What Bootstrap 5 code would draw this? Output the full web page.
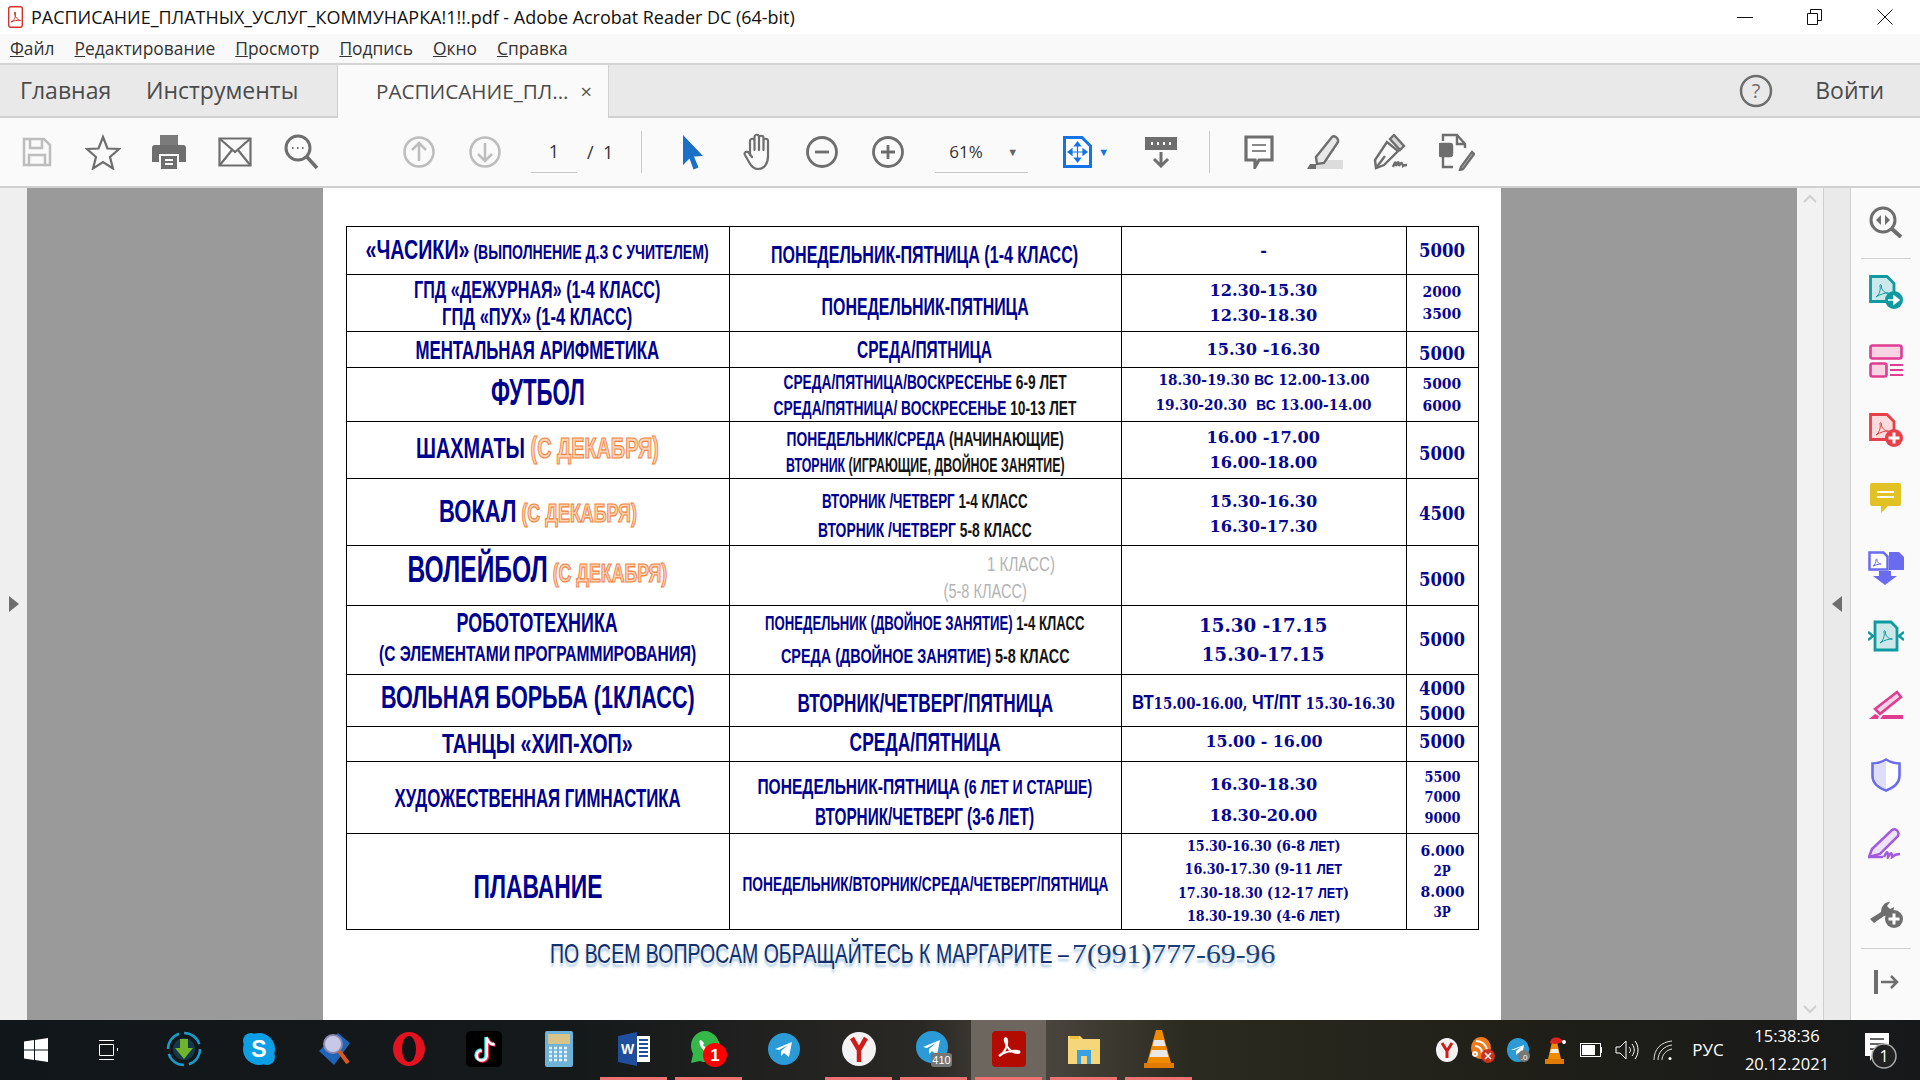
<!DOCTYPE html>
<html>
  <head>
    <title>Adobe Acrobat Reader DC</title>
    <link href="https://cdn.jsdelivr.net/npm/bootstrap@5.3.3/dist/css/bootstrap.min.css" rel="stylesheet">
    <style>
      html, body { height: 100%; }
      body { width: 1920px; height: 1080px; overflow: hidden; background: #fff; color: #333; font-family: "Open Sans", "Liberation Sans", sans-serif; }

      /* window chrome */
      .win-title { height: 34px; background: #fff; color: #111; font-size: 18px; white-space: nowrap; }
      .win-btn { width: 70px; height: 34px; }
      .menu-bar { height: 31px; background: #f9f9f9; border-bottom: 2px solid #d4d4d4; font-size: 17.4px; color: #333; gap: 20px; padding-left: 10px; }
      .tab-bar { height: 53px; background: #e9e9e9; border-bottom: 2px solid #d0d0d0; font-size: 23px; color: #4b4b4b; }
      .tab-home { width: 146px; padding-left: 20px; }
      .tab-tools { width: 191px; }
      .tab-doc { width: 272px; height: 53px; background: #fafafa; border-left: 1px solid #d0d0d0; border-right: 1px solid #d0d0d0; padding-left: 38px; margin-bottom: -2px; }
      .tab-x { font-size: 20px; margin-left: 14px; color: #555; }
      .sign-in { margin-left: 42px; margin-right: 36px; }
      .tool-bar { height: 70px; background: #fafafa; border-bottom: 2px solid #d0d0d0; padding-left: 4px; }
      .tool { width: 66px; height: 66px; flex: none; }
      .tool-sep { width: 1px; height: 42px; background: #c8c8c8; flex: none; }
      .page-box { width: 46px; height: 42px; border-bottom: 1px solid #c8c8c8; text-align: center; line-height: 40px; font-size: 18px; margin-left: 13px; }
      .page-total { margin-left: 10px; font-size: 18px; }
      .page-sep { margin-left: 28px; }
      .zoom-box { width: 93px; height: 42px; border-bottom: 1px solid #c8c8c8; line-height: 40px; font-size: 17px; padding: 0 10px 0 14px; margin-left: 14px; }
      .caret-gray { color: #666; font-size: 11px; }
      .caret-blue { color: #1473e6; font-size: 11px; margin-left: 6px; }
      .ms-tool-a { margin-left: 52px; }
      .ms-tool-b { margin-left: 18px; }
      .ms-tool-c { margin-left: 35px; }
      .ms-tool-d { margin-left: 19px; }
      .ms-tool-e { margin-left: 15px; }
      .ms-tool-f { margin-left: 16px; }
      .ms-tool-g { margin-left: -3px; }

      /* document area */
      .doc-area { height: 832px; }
      .side-left { width: 27px; background: #efefef; flex: none; }
      .viewer { width: 1770px; background: #9a9a9a; flex: none; }
      .pdf-page { width: 1178px; height: 832px; background: #fff; padding-top: 38px; }
      .scroll-col { width: 27px; background: #f2f2f2; border-right: 1px solid #cfcfcf; flex: none; padding: 6px 0; }
      .panel-fold { width: 27px; background: #eaeaea; border-right: 1px solid #cfcfcf; flex: none; }
      .tool-panel { flex: 1; background: #fafafa; padding-top: 18px; }
      .side-tool { height: 69px; }
      .side-tool-short { height: 52px; }
      .side-sep { width: 50px; height: 1px; background: #d0d0d0; margin: 0 auto 16px; }
      .side-sep-last { margin-bottom: 21px; }

      /* schedule */
      .table.sched { width: 1132px; margin: 0 auto; table-layout: fixed; border-color: #000; line-height: 20px; }
      .table.sched > tbody > tr > td { padding: 0; border: 1.5px solid #000; background: #fff; overflow: visible; }
      .sched col.c1 { width: 383px; }
      .sched col.c2 { width: 392px; }
      .sched col.c3 { width: 285px; }
      .sched col.c4 { width: 72px; }
      .r1 { height: 48px; } .r2 { height: 57px; } .r3 { height: 36px; } .r4 { height: 54px; }
      .r5 { height: 57px; } .r6 { height: 67px; } .r7 { height: 60px; } .r8 { height: 69px; }
      .r9 { height: 52px; } .r10 { height: 35px; } .r11 { height: 72px; } .r12 { height: 96px; }
      .ln { display: flex; justify-content: center; white-space: nowrap; }
      .fit { display: inline-block; flex: none; transform-origin: center; }
      .fit-left { display: inline-block; flex: none; transform-origin: left center; }
      .hw { font-family: "Liberation Sans Narrow", "Liberation Sans", sans-serif; font-weight: 700; color: #00008f; }
      .num { font-family: "DejaVu Serif", "Liberation Serif", serif; font-weight: 700; color: #07078f; font-size: 16px; }
      .orange { color: #fcd3b5; -webkit-text-stroke: 1.2px #f0813a; font-weight: 700; }
      .ink { color: #141414; }
      .ghost { color: #b4b4b4; font-weight: 400; }
      .ghost-a { padding-left: 192px; }
      .ghost-b { padding-left: 120px; }
      .lh20 { line-height: 20.5px; } .lh22 { line-height: 22px; } .lh23 { line-height: 23.5px; } .lh25 { line-height: 25px; }
      .lh26 { line-height: 26px; } .lh27 { line-height: 27px; } .lh29 { line-height: 29px; } .lh31 { line-height: 31px; } .lh33 { line-height: 33px; }
      .fs13 { font-size: 13px; } .fs14 { font-size: 14px; } .fs15 { font-size: 15px; } .fs17 { font-size: 17px; } .fs18 { font-size: 18px; }
      .fs20 { font-size: 20px; } .fs22 { font-size: 22px; } .fs24 { font-size: 24px; } .fs26 { font-size: 26px; }
      .fs28 { font-size: 28px; } .fs30 { font-size: 30px; } .fs32 { font-size: 32px; } .fs34 { font-size: 34px; } .fs36 { font-size: 36px; }
      .foot-note { margin-top: 6px; line-height: 36px; text-shadow: 0 4px 3px rgba(110,160,205,.6); }
      .foot-text { width: 522px; flex: none; }
      .foot-phone { width: 203px; flex: none; }
      .foot-note .hw { color: #12306e; font-weight: 400; }
      .foot-note .num { color: #1c3f78; font-weight: 400; font-family: "Liberation Serif", serif; }

      /* taskbar */
      .task-bar { height: 60px; background: linear-gradient(90deg, #11161a 0%, #15191a 30%, #2a2824 48%, #4c463f 54%, #2a2a20 62%, #1f1f18 80%, #17181a 100%); color: #fff; }
      .task-start { width: 72px; height: 60px; flex: none; }
      .task-first { margin-left: 2px; }
      .task-app { width: 75px; height: 60px; flex: none; border-bottom: 3px solid transparent; }
      .task-open { border-image: linear-gradient(90deg, transparent 7%, #ef7272 7%, #ef7272 93%, transparent 93%) 1; }
      .task-active { background: #6c665f; }
      .tray-item { width: 36px; height: 60px; flex: none; }
      .tray-lang { width: 54px; font-size: 17px; }
      .tray-clock { width: 104px; font-size: 16.5px; line-height: 28px; text-align: center; }
      .tray-note { width: 81px; height: 60px; flex: none; }
    </style>
    <script src="https://cdn.jsdelivr.net/npm/bootstrap@5.3.3/dist/js/bootstrap.bundle.min.js"></script>
  </head>
  <body class="d-flex flex-column">

    <!-- Title bar -->
    <div class="win-title d-flex align-items-center">
      <svg class="ms-2 me-2" width="15" height="22" viewBox="0 0 15 22"><rect x=".7" y=".7" width="13.6" height="20.6" rx="2" fill="#fff" stroke="#d8322a" stroke-width="1.4"/><path d="M3 16c3-1 5-5 4.500-9-.2-2-1.500-1-1 1 .6 3 3 6 6 6.500-3-.5-7 0-9.500 1.500z" fill="none" stroke="#d8322a" stroke-width="1"/></svg>
      <span class="fit-left" data-w="764">РАСПИСАНИЕ_ПЛАТНЫХ_УСЛУГ_КОММУНАРКА!1!!.pdf - Adobe Acrobat Reader DC (64-bit)</span>
      <div class="ms-auto d-flex">
        <div class="win-btn d-flex align-items-center justify-content-center"><svg width="16" height="16"><path d="M0 8.500h16" stroke="#111"/></svg></div>
        <div class="win-btn d-flex align-items-center justify-content-center"><svg width="16" height="16"><path d="M.5 4.500h10v11H.5zM3.500 4.500V.5h11v11h-4" fill="none" stroke="#111"/></svg></div>
        <div class="win-btn d-flex align-items-center justify-content-center"><svg width="16" height="16"><path d="M.5.5l15 15M15.500.5l-15 15" stroke="#111"/></svg></div>
      </div>
    </div>

    <!-- Menu -->
    <div class="menu-bar d-flex align-items-center">
      <span><u>Ф</u>айл</span><span><u>Р</u>едактирование</span><span><u>П</u>росмотр</span><span><u>П</u>одпись</span><span><u>О</u>кно</span><span><u>С</u>правка</span>
    </div>

    <!-- Tabs -->
    <div class="tab-bar d-flex align-items-center">
      <div class="tab-home">Главная</div>
      <div class="tab-tools">Инструменты</div>
      <div class="tab-doc d-flex align-items-center fs20"><span class="fit-left" data-w="192">РАСПИСАНИЕ_ПЛ...</span><span class="tab-x ms-auto me-3">×</span></div>
      <div class="ms-auto d-flex align-items-center">
        <svg width="34" height="34" viewBox="0 0 34 34"><circle cx="17" cy="17" r="15" fill="none" stroke="#6e6e6e" stroke-width="2.500"/><text x="17" y="24" text-anchor="middle" font-size="20" font-family="Open Sans" fill="#6e6e6e">?</text></svg>
        <span class="sign-in">Войти</span>
      </div>
    </div>

    <!-- Toolbar -->
    <div class="tool-bar d-flex align-items-center">
      <div class="tool d-flex align-items-center justify-content-center"><svg width="30" height="30" viewBox="0 0 30 30" fill="none" stroke="#bdbdbd" stroke-width="2.500"><path d="M2 2h20l6 6v20H2z"/><path d="M8 2v9h12V2M7 28V18h16v10"/></svg></div>
      <div class="tool d-flex align-items-center justify-content-center"><svg width="36" height="36" viewBox="0 0 36 36"><path d="M18 3l4.500 11.500L34 15l-9 8 3 11.500-10-6.500-10 6.500 3-11.500-9-8 11.500-.5z" fill="none" stroke="#6e6e6e" stroke-width="2.200"/></svg></div>
      <div class="tool d-flex align-items-center justify-content-center"><svg width="34" height="36" viewBox="0 0 34 36"><path d="M8 1h18v10H8z" fill="#7b7b7b"/><path d="M3 11h28a3 3 0 0 1 3 3v14h-7v-8H7v8H0V14a3 3 0 0 1 3-3z" fill="#6e6e6e"/><path d="M9 22h16v13H9z" fill="#6e6e6e"/><path d="M13 26h8M13 30h8" stroke="#fff" stroke-width="2"/></svg></div>
      <div class="tool d-flex align-items-center justify-content-center"><svg width="34" height="30" viewBox="0 0 34 30" fill="none" stroke="#6e6e6e" stroke-width="2.200"><path d="M1.500 1.500h31v27h-31z"/><path d="M1.500 1.500L17 15l15.500-13.500M1.500 28.500L14 13M32.500 28.500L20 13"/></svg></div>
      <div class="tool d-flex align-items-center justify-content-center"><svg width="36" height="36" viewBox="0 0 36 36" fill="none" stroke="#6e6e6e"><circle cx="15" cy="14" r="12" stroke-width="3"/><path d="M24 23l10 11" stroke-width="3.500"/><path d="M9 14h1.500M14 14h1.500M19 14h1.500" stroke-width="2"/></svg></div>

      <div class="tool d-flex align-items-center justify-content-center ms-tool-a"><svg width="32" height="32" viewBox="0 0 32 32" fill="none" stroke="#bdbdbd" stroke-width="2.500"><circle cx="16" cy="16" r="14.500"/><path d="M16 25V8M9 14l7-7 7 7"/></svg></div>
      <div class="tool d-flex align-items-center justify-content-center"><svg width="32" height="32" viewBox="0 0 32 32" fill="none" stroke="#bdbdbd" stroke-width="2.500"><circle cx="16" cy="16" r="14.500"/><path d="M16 7v17M9 18l7 7 7-7"/></svg></div>
      <div class="page-box">1</div>
      <div class="page-total">/&nbsp;&nbsp;1</div>
      <div class="tool-sep page-sep"></div>

      <div class="tool d-flex align-items-center justify-content-center ms-tool-b"><svg width="24" height="36" viewBox="0 0 24 36"><path d="M2 1l20 21-9 .5 4.500 11-5 2-4-11L2 31z" fill="#1a6fc9"/></svg></div>
      <div class="tool d-flex align-items-center justify-content-center"><svg width="36" height="38" viewBox="0 0 36 38" fill="none" stroke="#6e6e6e" stroke-width="2.200" stroke-linecap="round" stroke-linejoin="round"><path d="M9 22V8a2.200 2.200 0 0 1 4.500 0v9M13.500 17V4a2.200 2.200 0 0 1 4.500 0v13M18 17V5a2.200 2.200 0 0 1 4.500 0v12M22.500 17V8a2.200 2.200 0 0 1 4.500 0v15c0 8-4 13-10 13-5 0-7-3-9-7l-4-7c-1.500-3 2-4.500 4-2l3 4"/></svg></div>
      <div class="tool d-flex align-items-center justify-content-center ms-tool-g"><svg width="32" height="32" viewBox="0 0 32 32" fill="none" stroke="#6e6e6e" stroke-width="2.800"><circle cx="16" cy="16" r="14.500"/><path d="M9 16h14"/></svg></div>
      <div class="tool d-flex align-items-center justify-content-center"><svg width="32" height="32" viewBox="0 0 32 32" fill="none" stroke="#6e6e6e" stroke-width="2.800"><circle cx="16" cy="16" r="14.500"/><path d="M9 16h14M16 9v14"/></svg></div>
      <div class="zoom-box d-flex align-items-center justify-content-between"><span>61%</span><span class="caret-gray">▼</span></div>

      <div class="ms-tool-c d-flex align-items-center">
        <svg width="29" height="32" viewBox="0 0 29 32"><path d="M1.500 1.500H19l8.500 8.500v20.500h-26z" fill="#fff" stroke="#1473e6" stroke-width="3"/><path d="M14.500 7v18M6 16h17M14.500 6l-3 4h6zM14.500 26l-3-4h6zM5 16l4-3v6zM24 16l-4-3v6z" fill="#1473e6" stroke="#1473e6" stroke-width="1.200"/></svg>
        <span class="caret-blue">▼</span>
      </div>
      <div class="tool d-flex align-items-center justify-content-center ms-tool-d"><svg width="34" height="32" viewBox="0 0 34 32"><path d="M1 1h32v13H1z" fill="#6e6e6e"/><path d="M7 7.500h2M13 7.500h2M19 7.500h2M25 7.500h2" stroke="#fff" stroke-width="3"/><path d="M17 16v14M10 23l7 7 7-7" fill="none" stroke="#6e6e6e" stroke-width="3"/></svg></div>
      <div class="tool-sep ms-tool-e"></div>
      <div class="tool d-flex align-items-center justify-content-center ms-tool-f"><svg width="30" height="34" viewBox="0 0 30 34"><path d="M2 2h26v23H15l-4 7v-7H2z" fill="#fff" stroke="#6e6e6e" stroke-width="3.200"/><path d="M8 10h14M8 16h14" stroke="#888" stroke-width="2"/></svg></div>
      <div class="tool d-flex align-items-center justify-content-center"><svg width="36" height="36" viewBox="0 0 36 36"><path d="M4 35h32v-9H14z" fill="#dcdcdc"/><path d="M9 23L25 3c2-2 7 1 6 5L17 29l-7 1z" fill="#e8e8e8" stroke="#6e6e6e" stroke-width="2.400"/><path d="M3 30h6v5H0z" fill="#6e6e6e"/></svg></div>
      <div class="tool d-flex align-items-center justify-content-center"><svg width="36" height="36" viewBox="0 0 36 36" fill="none" stroke="#6e6e6e" stroke-width="2.400"><path d="M14 8L2 26l1 8 8-3 14-14z"/><path d="M17 5l4-4 10 11-4 4z" fill="#d8d8d8"/><path d="M3 34l9-12"/><path d="M20 33c2-6 3-6 3-1 2-5 3-5 3 0 2-4 3-4 4 0 1-1 3-1 4-1"/></svg></div>
      <div class="tool d-flex align-items-center justify-content-center"><svg width="36" height="38" viewBox="0 0 36 38" fill="none" stroke="#6e6e6e" stroke-width="2.400"><path d="M4 8V2h14l8 9v4"/><path d="M18 2v9h8"/><path d="M4 22v12h10"/><rect x="0" y="11" width="13" height="12" rx="2" fill="#6e6e6e"/><path d="M22 34l11-15 2 2-11 15-3 1z"/></svg></div>
    </div>

    <!-- Document area -->
    <div class="doc-area d-flex">
      <div class="side-left d-flex align-items-center justify-content-center">
        <svg width="10" height="16"><path d="M0 0l10 8-10 8z" fill="#6e6e6e"/></svg>
      </div>
      <div class="viewer d-flex justify-content-center">
        <div class="pdf-page">
          <table class="table table-bordered align-middle text-center mb-0 sched">
            <colgroup><col class="c1"><col class="c2"><col class="c3"><col class="c4"></colgroup>
            <tbody>
              <tr class="r1">
                <td><div class="ln"><span class="fit hw fs20" data-w="343"><span class="fs28">«ЧАСИКИ»</span> (ВЫПОЛНЕНИЕ Д.З С УЧИТЕЛЕМ)</span></div></td>
                <td class="pt-2"><div class="ln"><span class="fit hw fs24" data-w="307">ПОНЕДЕЛЬНИК-ПЯТНИЦА (1-4 КЛАСС)</span></div></td>
                <td><div class="ln"><span class="fit num" data-w="7">-</span></div></td>
                <td><div class="ln"><span class="fit num fs18" data-w="46">5000</span></div></td>
              </tr>
              <tr class="r2">
                <td class="lh27"><div class="ln"><span class="fit hw fs24" data-w="246">ГПД «ДЕЖУРНАЯ» (1-4 КЛАСС)</span></div><div class="ln"><span class="fit hw fs24" data-w="190">ГПД «ПУХ» (1-4 КЛАСС)</span></div></td>
                <td class="pt-2"><div class="ln"><span class="fit hw fs24" data-w="207">ПОНЕДЕЛЬНИК-ПЯТНИЦА</span></div></td>
                <td class="lh25"><div class="ln"><span class="fit num" data-w="108">12.30-15.30</span></div><div class="ln"><span class="fit num" data-w="108">12.30-18.30</span></div></td>
                <td class="lh22"><div class="ln"><span class="fit num fs15" data-w="39">2000</span></div><div class="ln"><span class="fit num fs15" data-w="39">3500</span></div></td>
              </tr>
              <tr class="r3">
                <td><div class="ln"><span class="fit hw fs26" data-w="244">МЕНТАЛЬНАЯ АРИФМЕТИКА</span></div></td>
                <td><div class="ln"><span class="fit hw fs24" data-w="135">СРЕДА/ПЯТНИЦА</span></div></td>
                <td><div class="ln"><span class="fit num" data-w="113">15.30 -16.30</span></div></td>
                <td class="pt-2"><div class="ln"><span class="fit num fs18" data-w="46">5000</span></div></td>
              </tr>
              <tr class="r4">
                <td class="pb-1"><div class="ln"><span class="fit hw fs36" data-w="94">ФУТБОЛ</span></div></td>
                <td class="lh26"><div class="ln"><span class="fit hw fs20" data-w="283">СРЕДА/ПЯТНИЦА/ВОСКРЕСЕНЬЕ <span class="ink">6-9 ЛЕТ</span></span></div><div class="ln"><span class="fit hw fs20" data-w="303">СРЕДА/ПЯТНИЦА/ ВОСКРЕСЕНЬЕ <span class="ink">10-13 ЛЕТ</span></span></div></td>
                <td class="lh23 pb-1"><div class="ln"><span class="fit num fs15" data-w="211">18.30-19.30 <span class="hw">ВС</span> 12.00-13.00</span></div><div class="ln"><span class="fit num fs15" data-w="216">19.30-20.30 &nbsp;<span class="hw">ВС</span> 13.00-14.00</span></div></td>
                <td class="lh22"><div class="ln"><span class="fit num fs15" data-w="39">5000</span></div><div class="ln"><span class="fit num fs15" data-w="39">6000</span></div></td>
              </tr>
              <tr class="r5">
                <td class="pb-1"><div class="ln"><span class="fit hw fs30" data-w="243">ШАХМАТЫ <span class="orange">(С ДЕКАБРЯ)</span></span></div></td>
                <td class="lh26 pt-1"><div class="ln"><span class="fit hw fs20" data-w="277">ПОНЕДЕЛЬНИК/СРЕДА <span class="ink">(НАЧИНАЮЩИЕ)</span></span></div><div class="ln"><span class="fit hw fs20" data-w="279">ВТОРНИК <span class="ink">(ИГРАЮЩИЕ, ДВОЙНОЕ ЗАНЯТИЕ)</span></span></div></td>
                <td class="lh25"><div class="ln"><span class="fit num" data-w="113">16.00 -17.00</span></div><div class="ln"><span class="fit num" data-w="108">16.00-18.00</span></div></td>
                <td class="pt-2"><div class="ln"><span class="fit num fs18" data-w="46">5000</span></div></td>
              </tr>
              <tr class="r6">
                <td><div class="ln"><span class="fit hw fs26" data-w="198"><span class="fs32">ВОКАЛ</span> <span class="orange">(С ДЕКАБРЯ)</span></span></div></td>
                <td class="lh29 pt-2"><div class="ln"><span class="fit hw fs20" data-w="206">ВТОРНИК /ЧЕТВЕРГ <span class="ink">1-4 КЛАСС</span></span></div><div class="ln"><span class="fit hw fs20" data-w="214">ВТОРНИК /ЧЕТВЕРГ <span class="ink">5-8 КЛАСС</span></span></div></td>
                <td class="lh25 pt-1"><div class="ln"><span class="fit num" data-w="108">15.30-16.30</span></div><div class="ln"><span class="fit num" data-w="108">16.30-17.30</span></div></td>
                <td class="pt-1"><div class="ln"><span class="fit num fs18" data-w="46">4500</span></div></td>
              </tr>
              <tr class="r7">
                <td class="pb-2"><div class="ln"><span class="fit hw fs26" data-w="260"><span class="fs36">ВОЛЕЙБОЛ</span> <span class="orange">(С ДЕКАБРЯ)</span></span></div></td>
                <td class="lh27 pt-1"><div class="ln ghost-a"><span class="fit hw ghost fs20" data-w="68">1 КЛАСС)</span></div><div class="ln ghost-b"><span class="fit hw ghost fs20" data-w="83">(5-8 КЛАСС)</span></div></td>
                <td></td>
                <td class="pt-2"><div class="ln"><span class="fit num fs18" data-w="46">5000</span></div></td>
              </tr>
              <tr class="r8">
                <td class="lh31 pb-1"><div class="ln"><span class="fit hw fs28" data-w="161">РОБОТОТЕХНИКА</span></div><div class="ln"><span class="fit hw fs22" data-w="317">(С ЭЛЕМЕНТАМИ ПРОГРАММИРОВАНИЯ)</span></div></td>
                <td class="lh33"><div class="ln"><span class="fit hw fs20" data-w="319">ПОНЕДЕЛЬНИК (ДВОЙНОЕ ЗАНЯТИЕ) <span class="ink">1-4 КЛАСС</span></span></div><div class="ln"><span class="fit hw fs20" data-w="289">СРЕДА (ДВОЙНОЕ ЗАНЯТИЕ) <span class="ink">5-8 КЛАСС</span></span></div></td>
                <td class="lh29"><div class="ln"><span class="fit num fs18" data-w="128">15.30 -17.15</span></div><div class="ln"><span class="fit num fs18" data-w="123">15.30-17.15</span></div></td>
                <td><div class="ln"><span class="fit num fs18" data-w="46">5000</span></div></td>
              </tr>
              <tr class="r9">
                <td class="pb-2"><div class="ln"><span class="fit hw fs32" data-w="314">ВОЛЬНАЯ БОРЬБА (1КЛАСС)</span></div></td>
                <td class="pt-1"><div class="ln"><span class="fit hw fs26" data-w="256">ВТОРНИК/ЧЕТВЕРГ/ПЯТНИЦА</span></div></td>
                <td class="pt-1"><div class="ln"><span class="fit num" data-w="263"><span class="hw fs20">ВТ</span>15.00-16.00, <span class="hw fs20">ЧТ/ПТ</span> 15.30-16.30</span></div></td>
                <td class="lh25"><div class="ln"><span class="fit num fs18" data-w="46">4000</span></div><div class="ln"><span class="fit num fs18" data-w="46">5000</span></div></td>
              </tr>
              <tr class="r10">
                <td><div class="ln"><span class="fit hw fs28" data-w="191">ТАНЦЫ «ХИП-ХОП»</span></div></td>
                <td class="pb-1"><div class="ln"><span class="fit hw fs26" data-w="151">СРЕДА/ПЯТНИЦА</span></div></td>
                <td class="pb-1"><div class="ln"><span class="fit num" data-w="117">15.00 - 16.00</span></div></td>
                <td class="pb-1"><div class="ln"><span class="fit num fs18" data-w="46">5000</span></div></td>
              </tr>
              <tr class="r11">
                <td><div class="ln"><span class="fit hw fs26" data-w="286">ХУДОЖЕСТВЕННАЯ ГИМНАСТИКА</span></div></td>
                <td class="lh29 pt-2"><div class="ln"><span class="fit hw fs22" data-w="335">ПОНЕДЕЛЬНИК-ПЯТНИЦА <span class="fs20">(6 ЛЕТ И СТАРШЕ)</span></span></div><div class="ln"><span class="fit hw fs24" data-w="219">ВТОРНИК/ЧЕТВЕРГ (3-6 ЛЕТ)</span></div></td>
                <td class="lh31 pt-1"><div class="ln"><span class="fit num" data-w="108">16.30-18.30</span></div><div class="ln"><span class="fit num" data-w="108">18.30-20.00</span></div></td>
                <td class="lh20"><div class="ln"><span class="fit num fs14" data-w="36">5500</span></div><div class="ln"><span class="fit num fs14" data-w="36">7000</span></div><div class="ln"><span class="fit num fs14" data-w="36">9000</span></div></td>
              </tr>
              <tr class="r12">
                <td class="pt-2"><div class="ln"><span class="fit hw fs34" data-w="129">ПЛАВАНИЕ</span></div></td>
                <td class="pt-1"><div class="ln"><span class="fit hw fs20" data-w="366">ПОНЕДЕЛЬНИК/ВТОРНИК/СРЕДА/ЧЕТВЕРГ/ПЯТНИЦА</span></div></td>
                <td class="lh23"><div class="ln"><span class="fit num fs14" data-w="154">15.30-16.30 (6-8 <span class="hw">ЛЕТ</span>)</span></div><div class="ln"><span class="fit num fs14" data-w="158">16.30-17.30 (9-11 <span class="hw">ЛЕТ</span></span></div><div class="ln"><span class="fit num fs14" data-w="171">17.30-18.30 (12-17 <span class="hw">ЛЕТ</span>)</span></div><div class="ln"><span class="fit num fs14" data-w="154">18.30-19.30 (4-6 <span class="hw">ЛЕТ</span>)</span></div></td>
                <td class="lh20"><div class="ln"><span class="fit num fs15" data-w="44">6.000</span></div><div class="ln"><span class="fit num fs14" data-w="17">2Р</span></div><div class="ln"><span class="fit num fs15" data-w="44">8.000</span></div><div class="ln"><span class="fit num fs14" data-w="17">3Р</span></div></td>
              </tr>
            </tbody>
          </table>
          <div class="ln foot-note">
            <div class="foot-text"><span class="fit-left hw fs28" data-w="519">ПО ВСЕМ ВОПРОСАМ ОБРАЩАЙТЕСЬ К МАРГАРИТЕ –</span></div>
            <div class="foot-phone"><span class="fit-left num fs28" data-w="203">7(991)777-69-96</span></div>
          </div>
        </div>
      </div>
      <div class="scroll-col d-flex flex-column justify-content-between align-items-center">
        <svg width="14" height="9"><path d="M1 8l6-6 6 6" fill="none" stroke="#cfcfcf" stroke-width="2"/></svg>
        <svg width="14" height="9"><path d="M1 1l6 6 6-6" fill="none" stroke="#cfcfcf" stroke-width="2"/></svg>
      </div>
      <div class="panel-fold d-flex align-items-center justify-content-center">
        <svg width="10" height="16"><path d="M10 0L0 8l10 8z" fill="#6e6e6e"/></svg>
      </div>

      <!-- Tools panel -->
      <div class="tool-panel">
        <div class="side-tool-short d-flex align-items-start justify-content-center"><svg width="34" height="32" viewBox="0 0 34 32" fill="none" stroke="#6e6e6e"><circle cx="14" cy="14" r="12" stroke-width="3"/><path d="M23 23l9 8" stroke-width="4"/><path d="M12 9l-5 5 5 5zM16 9l5 5-5 5z" fill="#6e6e6e" stroke="none"/></svg></div>
        <div class="side-sep"></div>
        <div class="side-tool d-flex align-items-start justify-content-center"><svg width="34" height="34" viewBox="0 0 34 34"><path d="M1.500 1.500H18l7 7v18H1.500z" fill="#cde8ea" stroke="#0f9aa0" stroke-width="2.800"/><path d="M7 22c3-2 5-7 4-11-.5-2 2-2 1.500 1 0 3 3 6 7 6-4 0-8 1-12.500 4z" fill="none" stroke="#0f9aa0"/><circle cx="25" cy="25" r="9" fill="#0f9aa0"/><path d="M19 25h10M25 21l5 4-5 4z" fill="#fff" stroke="#fff" stroke-width="1.500"/></svg></div>
        <div class="side-tool d-flex align-items-start justify-content-center"><svg width="34" height="34" viewBox="0 0 34 34"><rect x="1.500" y="1.500" width="31" height="13" rx="2" fill="#f8d3e4" stroke="#e03d92" stroke-width="2.600"/><rect x="1.500" y="19.500" width="16" height="13" rx="2" fill="#f8d3e4" stroke="#e03d92" stroke-width="2.600"/><path d="M21 21h13M21 26h13M21 31h13" stroke="#e03d92" stroke-width="1.800"/></svg></div>
        <div class="side-tool d-flex align-items-start justify-content-center"><svg width="34" height="34" viewBox="0 0 34 34"><path d="M1.500 1.500H18l7 7v18H1.500z" fill="#fbdcdc" stroke="#e8404a" stroke-width="2.800"/><path d="M7 22c3-2 5-7 4-11-.5-2 2-2 1.500 1 0 3 3 6 7 6-4 0-8 1-12.500 4z" fill="none" stroke="#e8404a"/><circle cx="25" cy="25" r="9" fill="#e8404a"/><path d="M19.500 25h11M25 19.500v11" stroke="#fff" stroke-width="3"/></svg></div>
        <div class="side-tool d-flex align-items-start justify-content-center"><svg width="32" height="32" viewBox="0 0 32 32"><path d="M2 1h27a2 2 0 0 1 2 2v19a2 2 0 0 1-2 2H18l-7 7v-7H2a2 2 0 0 1-2-2V3a2 2 0 0 1 2-2z" fill="#e2c125"/><path d="M7 10h17M7 15h17" stroke="#fff" stroke-width="2"/></svg></div>
        <div class="side-tool d-flex align-items-start justify-content-center"><svg width="36" height="36" viewBox="0 0 36 36"><path d="M1.500 1.500h14l4 4v13H1.500z" fill="#fff" stroke="#6b6bf0" stroke-width="2.500"/><path d="M5 15c2-1 3-4 3-6 0-2 1-1 1 0 0 2 2 4 4 4-3 0-5 1-8 2z" fill="none" stroke="#6b6bf0"/><path d="M21 1h10l5 5v13H21z" fill="#6b6bf0"/><path d="M11 20h12v5h6l-12 9-12-9h6z" fill="#6b6bf0"/></svg></div>
        <div class="side-tool d-flex align-items-start justify-content-center"><svg width="36" height="32" viewBox="0 0 36 32"><path d="M7 2h16l6 6v22H7z" fill="#cde8ea" stroke="#0f9aa0" stroke-width="2.800"/><path d="M12 23c3-2 5-7 4-11-.5-2 2-2 1.500 1 0 3 3 6 7 6-4 0-8 1-12.500 4z" fill="none" stroke="#0f9aa0"/><path d="M0 12l5 4-5 4M36 12l-5 4 5 4" fill="none" stroke="#0f9aa0" stroke-width="2.500"/></svg></div>
        <div class="side-tool d-flex align-items-start justify-content-center"><svg width="34" height="32" viewBox="0 0 34 32"><path d="M6 20L28 3l4 5-21 17z" fill="#f8d3e4" stroke="#e03d92" stroke-width="2.600"/><path d="M0 30l6-5 4 2-1 3zM14 26h20v4H11z" fill="#e03d92"/></svg></div>
        <div class="side-tool d-flex align-items-start justify-content-center"><svg width="30" height="34" viewBox="0 0 30 34"><path d="M15 1.500c5 3 9 4 13.500 4V18c0 8-7 12-13.500 14.500C8.500 30 1.500 26 1.500 18V5.500C6 5.500 10 4.500 15 1.500z" fill="#fff" stroke="#6b6bf0" stroke-width="2.600"/><path d="M15 3c-5 3-9 4-12 4v11c0 7 6 11 12 13z" fill="#dedefa"/></svg></div>
        <div class="side-tool d-flex align-items-start justify-content-center"><svg width="36" height="32" viewBox="0 0 36 32" fill="none" stroke="#a15be0" stroke-width="2.500"><path d="M1 30l3-8L24 3c3-2 8 1 6 6L12 27z" fill="#efe3fa"/><path d="M1 30h14M16 30c3-7 4-6 4 0 3-5 4-5 4 0 3-3 5-3 8-3"/></svg></div>
        <div class="side-tool-short d-flex align-items-start justify-content-center"><svg width="34" height="32" viewBox="0 0 34 32"><path d="M1 23l11-7c0-5 3-10 9-10l-3 4 3 3 4-2c0 6-5 9-10 9L5 27z" fill="#6e6e6e"/><circle cx="25" cy="23" r="9" fill="#6e6e6e"/><path d="M19.500 23h11M25 17.500v11" stroke="#fff" stroke-width="3"/></svg></div>
        <div class="side-sep side-sep-last"></div>
        <div class="d-flex justify-content-center"><svg width="26" height="24" viewBox="0 0 26 24"><path d="M3 1v22" stroke="#6e6e6e" stroke-width="4" stroke-linecap="round"/><path d="M8 12h16M18 6l6 6-6 6" fill="none" stroke="#6e6e6e" stroke-width="2.500"/></svg></div>
      </div>
    </div>

    <!-- Taskbar -->
    <div class="task-bar d-flex">
      <div class="task-start d-flex align-items-center justify-content-center"><svg width="24" height="24" viewBox="0 0 24 24" fill="#fff"><path d="M0 3.500l10-1.500v9.500H0zM11 1.900L24 0v11.500H11zM0 12.500h10V22L0 20.500zM11 12.500h13V24l-13-1.900z"/></svg></div>
      <div class="task-start d-flex align-items-center justify-content-center"><svg width="24" height="24" viewBox="0 0 24 24" fill="none" stroke="#fff"><path d="M3.500 6.500h14v11h-14zM3 2.500h15M3 21.500h15M21.500 10v3" /></svg></div>
      <div class="task-app task-first d-flex align-items-center justify-content-center"><svg width="36" height="36" viewBox="0 0 36 36"><circle cx="18" cy="18" r="16" fill="none" stroke="#1a9ac8" stroke-width="2.500" stroke-dasharray="20 5"/><circle cx="18" cy="18" r="11" fill="#14384a"/><path d="M14 8h8v9h5l-9 11-9-11h5z" fill="#6fb52c"/></svg></div>
      <div class="task-app d-flex align-items-center justify-content-center"><svg width="34" height="34" viewBox="0 0 34 34"><circle cx="17" cy="17" r="16" fill="#0d9fe6"/><circle cx="9" cy="9" r="8" fill="#0d9fe6"/><circle cx="25" cy="25" r="8" fill="#0d9fe6"/><text x="17" y="25" text-anchor="middle" font-size="23" font-weight="700" font-family="Liberation Sans" fill="#fff">S</text></svg></div>
      <div class="task-app d-flex align-items-center justify-content-center"><svg width="36" height="36" viewBox="0 0 36 36"><path d="M3 20L22 2l12 10-16 22z" fill="#1e64b8"/><circle cx="17" cy="13" r="9" fill="#c7c7e8" stroke="#8a8ab0" stroke-width="2"/><path d="M23 20l9 12" stroke="#d95a1e" stroke-width="4"/></svg></div>
      <div class="task-app d-flex align-items-center justify-content-center"><svg width="36" height="36" viewBox="0 0 36 36"><ellipse cx="18" cy="18" rx="16" ry="17" fill="#e2131f"/><ellipse cx="18" cy="18" rx="7" ry="13" fill="#0f1416"/></svg></div>
      <div class="task-app d-flex align-items-center justify-content-center"><svg width="36" height="36" viewBox="0 0 36 36"><rect width="36" height="36" rx="5" fill="#000"/><path d="M20 6v18a5 5 0 1 1-5-5M20 6c1 4 4 7 8 7" fill="none" stroke="#25e6e0" stroke-width="3.500"/><path d="M21.500 7v18a5 5 0 1 1-5-5M21.500 7c1 4 4 7 8 7" fill="none" stroke="#fe2c55" stroke-width="3.500"/><path d="M20.700 6.500v18a5 5 0 1 1-5-5M20.700 6.500c1 4 4 7 8 7" fill="none" stroke="#fff" stroke-width="2.500"/></svg></div>
      <div class="task-app d-flex align-items-center justify-content-center"><svg width="28" height="36" viewBox="0 0 28 36"><rect width="28" height="36" rx="2" fill="#6fb2d8"/><rect x="3" y="3" width="22" height="10" fill="#d8c48a"/><path d="M4 17h20M4 21h20M4 25h20M4 29h20" stroke="#e8f2f8" stroke-width="2.500" stroke-dasharray="3 2"/></svg></div>
      <div class="task-app task-open d-flex align-items-center justify-content-center"><svg width="32" height="34" viewBox="0 0 32 34"><path d="M0 4l19-4v34L0 30z" fill="#1f4f9c"/><path d="M19 4h13v26H19z" fill="#fff"/><path d="M21 8h9M21 12h9M21 16h9M21 20h9M21 24h9" stroke="#1f4f9c" stroke-width="2"/><text x="9.500" y="22" text-anchor="middle" font-size="14" font-weight="700" font-family="Liberation Sans" fill="#fff">W</text></svg></div>
      <div class="task-app task-open d-flex align-items-center justify-content-center"><svg width="38" height="38" viewBox="0 0 38 38"><path d="M15 1C7 1 1 8 1 16c0 3 1 6 2 8l-2 9 9-2c2 1 4 1 5 1 8 0 15-7 15-15S23 1 15 1z" fill="#35b84a"/><path d="M10 10c-2 3 2 10 6 12 2 1 5 1 6-1l-3-3-2 1-4-4 1-2-3-3z" fill="#fff"/><circle cx="25" cy="25" r="12" fill="#f00"/><text x="25" y="31" text-anchor="middle" font-size="17" font-weight="700" font-family="Liberation Sans" fill="#fff">1</text></svg></div>
      <div class="task-app d-flex align-items-center justify-content-center"><svg width="32" height="32" viewBox="0 0 32 32"><circle cx="16" cy="16" r="16" fill="#2a9bd6"/><path d="M7 16l17-7-3 15-5-4-3 3v-5l7-6-9 5z" fill="#fff"/></svg></div>
      <div class="task-app task-open d-flex align-items-center justify-content-center"><svg width="34" height="34" viewBox="0 0 34 34"><circle cx="17" cy="17" r="17" fill="#f3f3f3"/><path d="M10 6l7 12 7-12M17 18v12" fill="none" stroke="#d01b1b" stroke-width="4.500"/></svg></div>
      <div class="task-app task-open d-flex align-items-center justify-content-center"><svg width="36" height="36" viewBox="0 0 36 36"><circle cx="16" cy="16" r="16" fill="#2a9bd6"/><path d="M7 16l17-7-3 15-5-4-3 3v-5l7-6-9 5z" fill="#fff"/><rect x="15" y="22" width="21" height="14" rx="3" fill="#777"/><text x="25.500" y="33" text-anchor="middle" font-size="11" font-family="Liberation Sans" fill="#fff">410</text></svg></div>
      <div class="task-app task-open task-active d-flex align-items-center justify-content-center"><svg width="34" height="36" viewBox="0 0 34 36"><rect width="34" height="36" rx="4" fill="#b30b00"/><path d="M7 25c6-3 9-11 8-16-.5-3-3-2-2 1 1 6 6 12 13 12 2 0 2-2 0-2-6-1-14 1-19 5z" fill="none" stroke="#fff" stroke-width="2"/></svg></div>
      <div class="task-app task-open d-flex align-items-center justify-content-center"><svg width="32" height="30" viewBox="0 0 32 30"><path d="M0 2h12l3 3h17v25H0z" fill="#f5d67b"/><path d="M2 2h9v3H2z" fill="#f0c040"/><path d="M9 16h14v14h-4v-8h-6v8H9z" fill="#3aa0e0"/></svg></div>
      <div class="task-app task-open d-flex align-items-center justify-content-center"><svg width="30" height="38" viewBox="0 0 30 38"><path d="M12 0h6l9 33H3z" fill="#f08a00"/><path d="M10 10h10l1.500 6h-13zM7.500 20h15l2 7h-19z" fill="#e8e8e8"/><path d="M0 33h30v5H0z" fill="#e07a00"/></svg></div>

      <!-- Tray -->
      <div class="ms-auto d-flex align-items-center">
        <div class="tray-item d-flex align-items-center justify-content-center"><svg width="22" height="24" viewBox="0 0 22 24"><ellipse cx="11" cy="12" rx="11" ry="12" fill="#f3f3f3"/><path d="M6 5l5 8 5-8M11 13v7" fill="none" stroke="#d01b1b" stroke-width="3"/></svg></div>
        <div class="tray-item d-flex align-items-center justify-content-center"><svg width="24" height="26" viewBox="0 0 24 26"><ellipse cx="10" cy="11" rx="10" ry="11" fill="#f07a1e"/><path d="M4 15a2 2 0 1 0 .1 0M4 9c4 0 7 3 7 7M5 4c6 0 10 4 11 9" fill="none" stroke="#fff" stroke-width="2"/><circle cx="17" cy="19" r="7" fill="#c8321e"/><path d="M14 16l6 6M20 16l-6 6" stroke="#fff" stroke-width="1.500"/></svg></div>
        <div class="tray-item d-flex align-items-center justify-content-center"><svg width="24" height="24" viewBox="0 0 24 24"><ellipse cx="11" cy="12" rx="11" ry="12" fill="#2a9bd6"/><path d="M4 12l13-5-2 11-4-3-2 2v-4l5-4-7 3z" fill="#fff"/><circle cx="17" cy="18" r="6" fill="#777"/><text x="17" y="21.500" text-anchor="middle" font-size="8" font-family="Liberation Sans" fill="#fff">.0</text></svg></div>
        <div class="tray-item d-flex align-items-center justify-content-center"><svg width="22" height="28" viewBox="0 0 22 28"><path d="M8 6h5l4 17H4z" fill="#f08a00"/><path d="M7 13h7l1 4H6z" fill="#eee"/><path d="M1 23h19v5H1z" fill="#e07a00"/><path d="M6 7c0-5 6-7 11-4l3 3-9 2z" fill="#d22"/><circle cx="20" cy="6" r="2" fill="#fff"/></svg></div>
        <div class="tray-item d-flex align-items-center justify-content-center"><svg width="22" height="14" viewBox="0 0 22 14"><rect x=".5" y=".5" width="20" height="13" fill="none" stroke="#fff"/><rect x="2" y="2" width="13" height="10" fill="#fff"/><rect x="20.500" y="4" width="1.500" height="6" fill="#fff"/></svg></div>
        <div class="tray-item d-flex align-items-center justify-content-center"><svg width="24" height="22" viewBox="0 0 24 22" fill="none" stroke="#fff"><path d="M1 8h4l6-6v18l-6-6H1zM14 8c2 2 2 4 0 6M17 5c3 4 3 8 0 12M20 2c4 5 4 13 0 18"/></svg></div>
        <div class="tray-item d-flex align-items-center justify-content-center"><svg width="22" height="22" viewBox="0 0 22 22" fill="none" stroke="#ddd"><path d="M2 21C2 10 9 3 20 2M6 21c0-8 6-14 14-15M10 21c0-5 4-10 10-11"/><circle cx="18" cy="19.500" r="1.500" fill="#fff" stroke="none"/></svg></div>
        <div class="tray-lang d-flex align-items-center justify-content-center">РУС</div>
        <div class="tray-clock"><div>15:38:36</div><div>20.12.2021</div></div>
        <div class="tray-note d-flex align-items-center justify-content-center"><svg width="40" height="40" viewBox="0 0 40 40"><path d="M5 3h24v23H13l-3 5v-5H5z" fill="#fff"/><path d="M10 9h14M10 14h14M10 19h14" stroke="#333" stroke-width="1.500"/><circle cx="24" cy="26" r="12" fill="#222" stroke="#aaa" stroke-width="1.500"/><text x="24" y="32" text-anchor="middle" font-size="16" font-family="Open Sans" fill="#fff">1</text></svg></div>
      </div>
    </div>

    <script>
      // squeeze each line to the width it has in the pdf, the font here is wider than the original
      document.querySelectorAll('[data-w]').forEach(function (el) {
        el.style.transform = 'scaleX(' + (el.dataset.w / el.offsetWidth) + ')';
      });
    </script>
  </body>
</html>
